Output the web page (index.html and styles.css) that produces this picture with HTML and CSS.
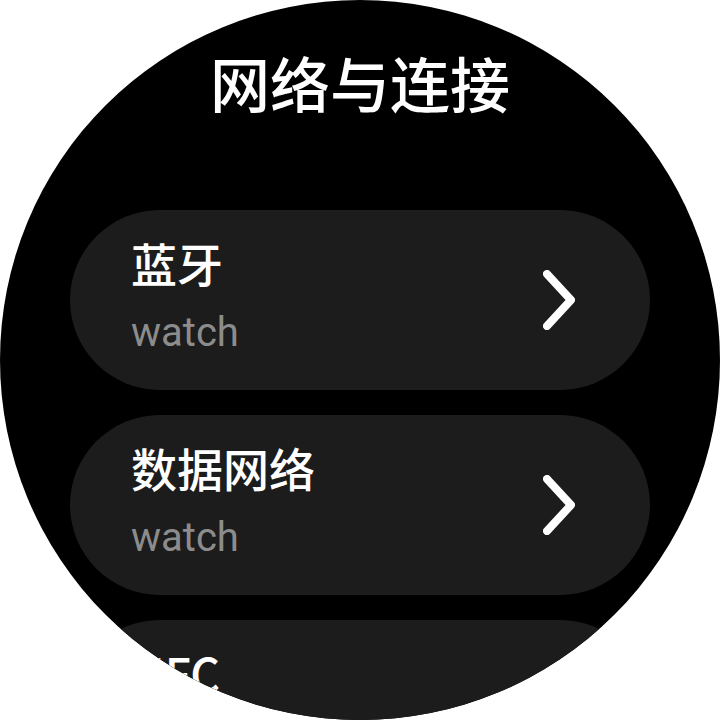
FILE: index.html
```html
<!DOCTYPE html>
<html lang="zh-CN">
<head>
<meta charset="utf-8">
<link rel="stylesheet" href="styles.css">
</head>
<body>
<div class="screen">
  <header class="header">
    <h1 class="title">网络与连接</h1>
  </header>
  <div class="list">
    <div class="card">
      <div class="card-text">
        <div class="card-title">蓝牙</div>
        <div class="card-sub">watch</div>
      </div>
      <svg class="chevron" viewBox="0 0 32 60" width="32" height="60"><polyline points="4,4 28,30 4,56" fill="none" stroke="#fff" stroke-width="8" stroke-linecap="round" stroke-linejoin="round"/></svg>
    </div>
    <div class="card">
      <div class="card-text">
        <div class="card-title">数据网络</div>
        <div class="card-sub">watch</div>
      </div>
      <svg class="chevron" viewBox="0 0 32 60" width="32" height="60"><polyline points="4,4 28,30 4,56" fill="none" stroke="#fff" stroke-width="8" stroke-linecap="round" stroke-linejoin="round"/></svg>
    </div>
    <div class="card">
      <div class="card-text">
        <div class="card-title">NFC</div>
        <div class="card-sub">watch</div>
      </div>
    </div>
  </div>
</div>
</body>
</html>
```
FILE: styles.css
```css
html, body {
  margin: 0;
  padding: 0;
  background: #fff;
}
.screen {
  width: 720px;
  height: 720px;
  border-radius: 50%;
  background: #000;
  overflow: hidden;
  padding: 0 70px;
  box-sizing: border-box;
  font-family: "Noto Sans CJK SC", sans-serif;
  color: #fff;
}
.header {
  height: 210px;
  box-sizing: border-box;
  padding-top: 50px;
}
.title {
  margin: 0;
  font-size: 60px;
  line-height: 64px;
  font-weight: 500;
  text-align: center;
}
.list {
  display: flex;
  flex-direction: column;
  gap: 25px;
}
.card {
  flex: none;
  height: 180px;
  border-radius: 90px;
  background: #1c1c1c;
  display: flex;
  align-items: center;
  padding: 0 75px 0 61px;
  box-sizing: border-box;
}
.card-text {
  flex: 1;
  display: flex;
  flex-direction: column;
  padding-bottom: 12px;
}
.card-title {
  font-size: 46px;
  line-height: 60px;
  font-weight: 500;
}
.card-sub {
  margin-top: 18px;
  font-family: Roboto, sans-serif;
  font-size: 40px;
  line-height: 46px;
  color: #8c8c8c;
}
.chevron {
  flex: none;
  display: block;
}
```
